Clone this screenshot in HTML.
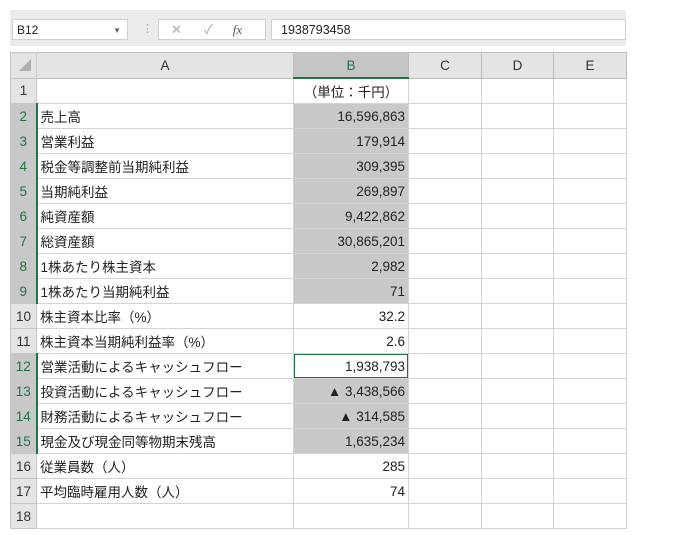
<!DOCTYPE html><html><head><meta charset="utf-8"><style>
body{margin:0;width:698px;height:535px;background:#fff;position:relative;overflow:hidden;font-family:"Liberation Sans","Noto Sans CJK JP",sans-serif;font-size:13px;color:#222}
.a{position:absolute}
table{position:absolute;left:10px;top:52px;border-collapse:collapse;table-layout:fixed}
td{border:1px solid #d4d4d4;height:24px;padding:0 3px;white-space:nowrap;overflow:hidden;font-size:13.5px}
.h{background:#e4e4e4;text-align:center;color:#333;border-color:#bdbdbd}
.rh{background:#e4e4e4;text-align:center;color:#333;padding:0;border-color:#c8c8c8}
.rs{background:#c8c8c8;color:#217346}
.s{background:#c9c9c9}
.r{text-align:right}
</style></head><body>
<div class="a" style="left:10px;top:10px;width:616px;height:36px;background:#ececec"></div>
<div class="a" style="left:12px;top:19px;width:116px;height:21px;background:#fff;border:1px solid #d0d0d0;font-size:12px;line-height:21px;padding-left:4px;box-sizing:border-box">B12<span style="position:absolute;right:6px;font-size:8px;color:#666">▼</span></div>
<div class="a" style="left:142px;top:22px;color:#aaa;font-size:11px">⋮</div>
<div class="a" style="left:158px;top:19px;width:108px;height:21px;background:#fff;border:1px solid #d0d0d0;box-sizing:border-box;font-size:13px;color:#aaa;line-height:20px"><span style="margin-left:12px">✕</span><span style="margin-left:22px">✓</span><span style="margin-left:20px;font-style:italic;font-family:'Liberation Serif',serif;color:#555">fx</span></div>
<div class="a" style="left:271px;top:19px;width:355px;height:21px;background:#fff;border:1px solid #d0d0d0;box-sizing:border-box;font-size:12.5px;line-height:20px;padding-left:9px">1938793458</div>
<table>
<colgroup><col style="width:26px"><col style="width:257px"><col style="width:115px"><col style="width:73px"><col style="width:72px"><col style="width:73px"></colgroup>
<tr><td class="rh" style="height:24px"><svg width="18" height="16" style="display:block;margin:auto"><polygon points="16,2 16,14 4,14" fill="#b0b0b0"/></svg></td><td class="h">A</td><td class="h" style="background:#c6c6c6;color:#217346;border-bottom:2px solid #217346">B</td><td class="h">C</td><td class="h">D</td><td class="h">E</td></tr>
<tr><td class="rh">1</td><td></td><td style="text-align:center">（単位：千円）</td><td></td><td></td><td></td></tr>
<tr><td class="rh rs">2</td><td style="border-left:2px solid #217346">売上高</td><td class="s r">16,596,863</td><td></td><td></td><td></td></tr>
<tr><td class="rh rs">3</td><td style="border-left:2px solid #217346">営業利益</td><td class="s r">179,914</td><td></td><td></td><td></td></tr>
<tr><td class="rh rs">4</td><td style="border-left:2px solid #217346">税金等調整前当期純利益</td><td class="s r">309,395</td><td></td><td></td><td></td></tr>
<tr><td class="rh rs">5</td><td style="border-left:2px solid #217346">当期純利益</td><td class="s r">269,897</td><td></td><td></td><td></td></tr>
<tr><td class="rh rs">6</td><td style="border-left:2px solid #217346">純資産額</td><td class="s r">9,422,862</td><td></td><td></td><td></td></tr>
<tr><td class="rh rs">7</td><td style="border-left:2px solid #217346">総資産額</td><td class="s r">30,865,201</td><td></td><td></td><td></td></tr>
<tr><td class="rh rs">8</td><td style="border-left:2px solid #217346">1株あたり株主資本</td><td class="s r">2,982</td><td></td><td></td><td></td></tr>
<tr><td class="rh rs">9</td><td style="border-left:2px solid #217346">1株あたり当期純利益</td><td class="s r">71</td><td></td><td></td><td></td></tr>
<tr><td class="rh">10</td><td>株主資本比率（%）</td><td class="r">32.2</td><td></td><td></td><td></td></tr>
<tr><td class="rh">11</td><td>株主資本当期純利益率（%）</td><td class="r">2.6</td><td></td><td></td><td></td></tr>
<tr><td class="rh rs">12</td><td style="border-left:2px solid #217346">営業活動によるキャッシュフロー</td><td class="r" style="box-shadow:inset 0 0 0 1px #217346">1,938,793</td><td></td><td></td><td></td></tr>
<tr><td class="rh rs">13</td><td style="border-left:2px solid #217346">投資活動によるキャッシュフロー</td><td class="s r">▲ 3,438,566</td><td></td><td></td><td></td></tr>
<tr><td class="rh rs">14</td><td style="border-left:2px solid #217346">財務活動によるキャッシュフロー</td><td class="s r">▲ 314,585</td><td></td><td></td><td></td></tr>
<tr><td class="rh rs">15</td><td style="border-left:2px solid #217346">現金及び現金同等物期末残高</td><td class="s r">1,635,234</td><td></td><td></td><td></td></tr>
<tr><td class="rh">16</td><td>従業員数（人）</td><td class="r">285</td><td></td><td></td><td></td></tr>
<tr><td class="rh">17</td><td>平均臨時雇用人数（人）</td><td class="r">74</td><td></td><td></td><td></td></tr>
<tr><td class="rh">18</td><td></td><td></td><td></td><td></td><td></td></tr>
</table>
</body></html>
